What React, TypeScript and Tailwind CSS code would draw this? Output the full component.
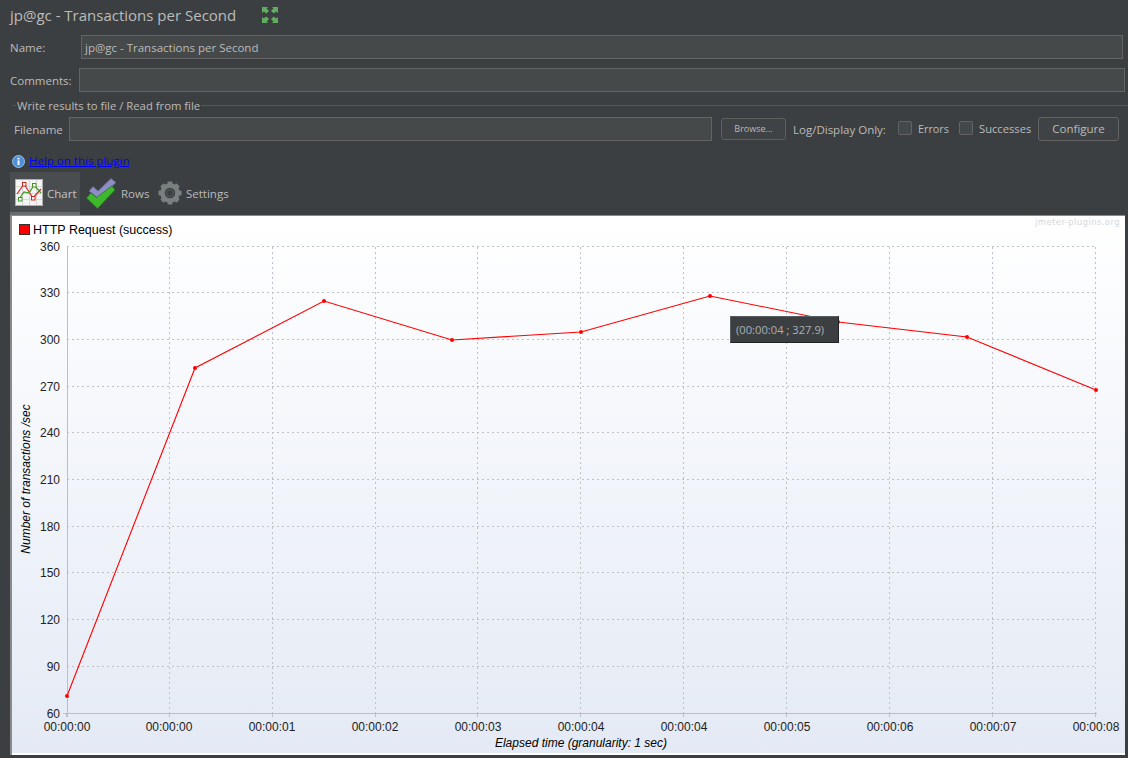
import React from "react";

const xs = [67, 170, 273, 376, 478, 581, 684, 787, 890, 993, 1096];
const labelXs = [67, 169, 272, 375, 478, 581, 684, 787, 890, 993, 1096];
const xl = ["00:00:00","00:00:00","00:00:01","00:00:02","00:00:03","00:00:04","00:00:04","00:00:05","00:00:06","00:00:07","00:00:08"];
const yl = [360,330,300,270,240,210,180,150,120,90,60];
const pts: [number, number][] = [[67,696],[195,368],[324,301],[452,340],[581,332],[710,296],[838,322],[967,337],[1096,390]];
const yOf = (i: number) => Math.floor(246 + (i * 467) / 10);

function Expand() {
  return (
    <svg width="16" height="16" viewBox="0 0 16 16" className="shrink-0">
      <g fill="#5fae5f">
        <path d="M0 0h6L4.600 1.600 7 4 4.200 6.600 1.800 4.400 0 6z" />
        <path d="M16 0h-6l1.400 1.600L9 4l2.800 2.600 2.400-2.200L16 6z" />
        <path d="M0 16h6l-1.400-1.600L7 12 4.200 9.400 1.800 11.600 0 10z" />
        <path d="M16 16h-6l1.400-1.600L9 12l2.800-2.600 2.400 2.200L16 10z" />
      </g>
    </svg>
  );
}

function ChartIcon() {
  return (
    <svg width="28" height="27" viewBox="0 0 28 27" className="shrink-0">
      <rect x="0.5" y="0.5" width="27" height="26" fill="#f4f4f4" stroke="#b0b0b0" />
      <path d="M7.500 1v25M14.500 1v25M21.500 1v25M1 7.500h26M1 14.500h26M1 20.500h26" stroke="#d8d8d8" strokeWidth="1" />
      <path d="M2 15 9 5l9 14 8-9" fill="none" stroke="#d02a20" strokeWidth="1.2" />
      <path d="M4 20 9 13 14 14 19 6l7 8" fill="none" stroke="#3c9a20" strokeWidth="1.2" />
      <rect x="7.5" y="3.5" width="3.5" height="3.5" fill="#fff" stroke="#d02a20" />
      <rect x="16.5" y="17.5" width="3.5" height="3.5" fill="#fff" stroke="#d02a20" />
      <rect x="3.5" y="18.5" width="3.5" height="3.5" fill="#fff" stroke="#3c9a20" />
      <rect x="17.5" y="4.5" width="3.5" height="3.5" fill="#fff" stroke="#3c9a20" />
    </svg>
  );
}

function RowsIcon() {
  return (
    <svg width="31" height="31" viewBox="0 0 31 31" className="shrink-0">
      <path d="M3 13 7 8.500 12 13 25 0.500 30 4.500 13 21z" fill="#8e8ec4" stroke="#62628e" strokeWidth="0.8" />
      <path d="M0.500 20l4.500-5 5.500 4.500L26 8l3 4-17.500 18.500z" fill="#3fb82e" stroke="#1f7d18" strokeWidth="0.8" />
    </svg>
  );
}

function GearIcon() {
  const teeth = [0, 45, 90, 135, 180, 225, 270, 315];
  return (
    <svg width="24" height="24" viewBox="0 0 24 24" className="shrink-0">
      {teeth.map((a) => (
        <rect key={a} x="9.5" y="0.5" width="5" height="5" rx="1" fill="#7a8080" transform={`rotate(${a} 12 12)`} />
      ))}
      <circle cx="12" cy="12" r="7.5" fill="none" stroke="#7a8080" strokeWidth="4.5" />
      <circle cx="12" cy="12" r="3.5" fill="#3c3f41" stroke="#5a5e5e" />
    </svg>
  );
}

function InfoIcon() {
  return (
    <svg width="13" height="13" viewBox="0 0 13 13" className="shrink-0">
      <circle cx="6.5" cy="6.5" r="6" fill="#4d8fd8" stroke="#9cc0e8" />
      <rect x="5.6" y="5.4" width="1.9" height="4.6" fill="#fff" />
      <rect x="5.6" y="2.8" width="1.9" height="1.7" fill="#fff" />
    </svg>
  );
}

function Chart() {
  return (
    <svg width="1113" height="539" viewBox="12 216 1113 539" className="block">
      <defs>
        <linearGradient id="bg" x1="0" y1="0" x2="0" y2="1">
          <stop offset="0" stopColor="#ffffff" />
          <stop offset="1" stopColor="#e4eaf5" />
        </linearGradient>
      </defs>
      <rect x="12" y="216" width="1113" height="537" fill="url(#bg)" />
      <rect x="12" y="753" width="1113" height="2" fill="#ffffff" />
      <g stroke="#c0c0cc" strokeWidth="1" strokeDasharray="2 3" shapeRendering="crispEdges">
        {yl.slice(0, 10).map((_, i) => (
          <line key={i} x1="67" x2="1096" y1={yOf(i) + 0.5} y2={yOf(i) + 0.5} />
        ))}
        {xs.slice(1).map((x) => (
          <line key={x} x1={x - 0.5} x2={x - 0.5} y1="247" y2="713" />
        ))}
      </g>
      <g stroke="#b8c0d0" strokeWidth="1" shapeRendering="crispEdges">
        <line x1="67.5" x2="67.5" y1="247" y2="717" />
        <line x1="63" x2="1097" y1="713.5" y2="713.5" />
        {xs.map((x) => (
          <line key={x} x1={x - 0.5} x2={x - 0.5} y1="713" y2="717" />
        ))}
      </g>
      <polyline points={pts.map((p) => p.join(",")).join(" ")} fill="none" stroke="#ff0000" strokeWidth="1.1" />
      {pts.map((p, i) => (
        <circle key={i} cx={p[0]} cy={p[1]} r="2" fill="#ff0000" />
      ))}
      <g fontFamily='"Liberation Sans", Arial, sans-serif' fontSize="12" fill="#222222">
        {yl.map((v, i) => (
          <text key={v} x="60" y={yOf(i) + 5} textAnchor="end">{v}</text>
        ))}
        {labelXs.map((x, i) => (
          <text key={i} x={x} y="731" textAnchor="middle">{xl[i]}</text>
        ))}
        <text x="581" y="747" textAnchor="middle" fontStyle="italic" fill="#000">Elapsed time (granularity: 1 sec)</text>
        <text transform="translate(30 479) rotate(-90)" x="0" y="0" textAnchor="middle" fontStyle="italic" fill="#000">Number of transactions /sec</text>
      </g>
      <rect x="19.5" y="224.500" width="10" height="10" fill="#ff0000" stroke="#333" strokeWidth="1" />
      <text x="33" y="234" fontFamily='"Liberation Sans", Arial, sans-serif' fontSize="12.5" fill="#000">HTTP Request (success)</text>
      <text x="1120" y="225" textAnchor="end" fontFamily='"DejaVu Sans", sans-serif' fontSize="8.500" fill="#d4d8dd" letterSpacing="0.4">jmeter-plugins.org</text>
    </svg>
  );
}

export default function App() {
  return (
    <div className="w-[1128px] h-[758px] overflow-hidden bg-[#3c3f41] text-[#bbbbbb] text-[11.5px] leading-[16px] flex flex-col font-['Open_Sans','Noto_Sans',sans-serif]">
      <div className="h-[30px] pl-[10px] flex items-center">
        <span className="w-[252px] shrink-0 text-[15px] leading-[30px] whitespace-nowrap">jp@gc - Transactions per Second</span>
        <Expand />
      </div>
      <div className="mt-[5px] h-[24px] flex items-center pl-[10px] pr-[5px]">
        <span className="w-[71px] shrink-0 pt-px">Name:</span>
        <div className="flex-1 h-[24px] bg-[#45494a] border border-[#646464] pl-[3px] leading-[23px]">jp@gc - Transactions per Second</div>
      </div>
      <div className="mt-[9px] h-[24px] flex items-center pl-[10px] pr-[3px]">
        <span className="w-[69px] shrink-0 pt-px">Comments:</span>
        <div className="flex-1 h-[24px] bg-[#45494a] border border-[#646464]" />
      </div>
      <div className="mt-[5px] h-[16px] flex items-center pl-[12px]">
        <div className="w-[4px] h-px bg-[#555759] shrink-0" />
        <span className="px-[1px] pt-px whitespace-nowrap text-[11.3px]">Write results to file / Read from file</span>
        <div className="flex-1 h-px bg-[#555759]" />
      </div>
      <div className="mt-[4px] h-[24px] flex items-center pl-[14px]">
        <span className="w-[55px] shrink-0 pt-px">Filename</span>
        <div className="w-[643px] shrink-0 h-[24px] bg-[#45494a] border border-[#646464]" />
        <div className="ml-[9px] w-[65px] shrink-0 h-[22px] border border-[#5e6060] rounded-[3px] flex items-center justify-center text-[9px] bg-[#3f4345]">Browse...</div>
        <span className="ml-[7px] w-[94px] shrink-0 pt-px whitespace-nowrap">Log/Display Only:</span>
        <div className="ml-[11px] w-[14px] shrink-0 h-[14px] mb-[2px] border border-[#646464] rounded-[2px] bg-[#43494a]" />
        <span className="ml-[6px] w-[30px] shrink-0 text-[10.8px]">Errors</span>
        <div className="ml-[11px] w-[14px] shrink-0 h-[14px] mb-[2px] border border-[#646464] rounded-[2px] bg-[#43494a]" />
        <span className="ml-[6px] w-[52px] shrink-0 text-[11.2px]">Successes</span>
        <div className="ml-[7px] w-[81px] shrink-0 h-[24px] border border-[#646464] rounded-[3px] flex items-center justify-center bg-[#3f4345]">Configure</div>
      </div>
      <div className="mt-[12px] h-[16px] flex items-center pl-[12px]">
        <InfoIcon />
        <span className="ml-[4px] text-[#0000ff] underline">Help on this plugin</span>
      </div>
      <div className="mt-[3px] h-[43px] flex items-stretch pl-[10px]">
        <div className="w-[70px] shrink-0 bg-[#4a4d4f] border-b-[3px] border-[#6a6d6f] flex items-center pl-[5px]">
          <ChartIcon />
          <span className="ml-[4px] pt-[3px] text-[#c4c4c4]">Chart</span>
        </div>
        <div className="w-[73px] shrink-0 flex items-center pl-[6px] pb-[1px]">
          <RowsIcon />
          <span className="ml-[4px] pt-[1px]">Rows</span>
        </div>
        <div className="flex items-center pl-[5px] pb-[1px]">
          <GearIcon />
          <span className="ml-[4px] pt-[1px]">Settings</span>
        </div>
      </div>
      <div className="ml-[10px] w-[1115px] border-t border-l-2 border-[#8a8a8a] relative">
        <Chart />
        <div className="absolute left-[718px] top-[100px] w-[109px] h-[27px] bg-[#3c3f41] border border-t-[#5b5e60] border-l-[#5b5e60] border-r-[#1f2122] border-b-[#1f2122] flex items-center pl-[5px] text-[11.2px] text-[#a9b0b8] whitespace-nowrap">
          (00:00:04 ; 327.9)
        </div>
      </div>
    </div>
  );
}
